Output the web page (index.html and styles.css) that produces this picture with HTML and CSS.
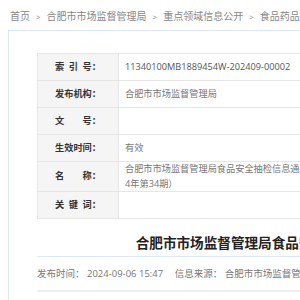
FILE: index.html
```html
<!DOCTYPE html>
<html>
<head>
  <title>合肥市市场监督管理局食品安全抽检信息通告</title>
  <meta http-equiv="Content-Type" content="text/html;charset=utf-8" />
  <link rel="stylesheet" href="styles.css">
</head>
<body>
  <div class="crumb">
    <a href="#">首页</a><span class="sep">&gt;</span><a href="#">合肥市市场监督管理局</a><span class="sep">&gt;</span><a href="#">重点领域信息公开</a><span class="sep">&gt;</span><a href="#">食品药品</a>
  </div>
  <div class="box">
    <table class="info">
      <colgroup>
        <col class="c-lab"><col class="c-val"><col class="c-lab"><col class="c-val">
      </colgroup>
      <tr>
        <th><span class="lab">索引号</span>：</th>
        <td class="num">11340100MB1889454W-202409-00002</td>
        <th><span class="lab">信息分类</span>：</th>
        <td>重点领域信息公开 / 食品药品</td>
      </tr>
      <tr>
        <th><span class="lab">发布机构</span>：</th>
        <td>合肥市市场监督管理局</td>
        <th><span class="lab">生成日期</span>：</th>
        <td>2024-09-06</td>
      </tr>
      <tr>
        <th><span class="lab">文号</span>：</th>
        <td></td>
        <th><span class="lab">发文日期</span>：</th>
        <td></td>
      </tr>
      <tr>
        <th><span class="lab">生效时间</span>：</th>
        <td>有效</td>
        <th><span class="lab">废止时间</span>：</th>
        <td>暂无</td>
      </tr>
      <tr>
        <th><span class="lab">名称</span>：</th>
        <td>合肥市市场监督管理局食品安全抽检信息通告（2024年第34期）</td>
        <th><span class="lab">主题分类</span>：</th>
        <td>食品药品</td>
      </tr>
      <tr>
        <th><span class="lab">关键词</span>：</th>
        <td></td>
        <th><span class="lab">内容概述</span>：</th>
        <td></td>
      </tr>
    </table>

    <h1 class="title">合肥市市场监督管理局食品安全抽检信息通告（2024年第34期）</h1>
    <div class="meta">
      <span>发布时间： 2024-09-06 15:47</span>
      <span>信息来源： 合肥市市场监督管理局</span>
      <span>浏览次数：</span>
    </div>
  </div>
</body>
</html>
```

FILE: styles.css
```css
html, body { overflow: hidden; }
body {
  margin: 0;
  background: #fff;
  font-family: "Open Sans", "Noto Sans CJK SC", sans-serif;
  color: #666;
}
a { color: inherit; text-decoration: none; }

.crumb {
  height: 30px;
  line-height: 32px;
  padding-left: 10px;
  font-size: 10px;
  color: #888;
  white-space: nowrap;
}
.crumb .sep {
  margin: 0 6px;
  font-size: 8px;
}

.box {
  margin-left: 8px;
  width: 610px;
  padding: 22px 28px 40px;
  border: 1px solid #dbe7f4;
}

.info {
  width: 610px;
  border-collapse: collapse;
  table-layout: fixed;
  font-size: 9.2px;
}
.info col.c-lab { width: 81px; }
.info col.c-val { width: 224px; }
.info tr { height: 27px; }
.info th,
.info td {
  border: 1px solid #e6e6e6;
  padding: 0 6px;
  line-height: 14.5px;
}
.info th {
  background: #f5f5f5;
  color: #333;
  font-weight: bold;
  text-align: center;
  white-space: nowrap;
}
.info td {
  text-align: left;
  color: #777;
  word-break: break-all;
}
.info td.num { color: #555; }
.lab {
  display: inline-block;
  width: 4em;
  text-align: justify;
  text-align-last: justify;
  vertical-align: top;
}

.title {
  margin: 14px 0 0;
  padding: 0 26px 3px 0;
  border-bottom: 1px solid #dbe7f4;
  font-size: 13.6px;
  line-height: 20px;
  color: #222;
  text-align: center;
  white-space: nowrap;
}

.meta {
  margin-top: 10px;
  padding-bottom: 9px;
  border-bottom: 2px solid #eee;
  font-size: 9.5px;
  line-height: 14px;
  color: #777;
  white-space: nowrap;
}
.meta span { margin-right: 9px; }
```
